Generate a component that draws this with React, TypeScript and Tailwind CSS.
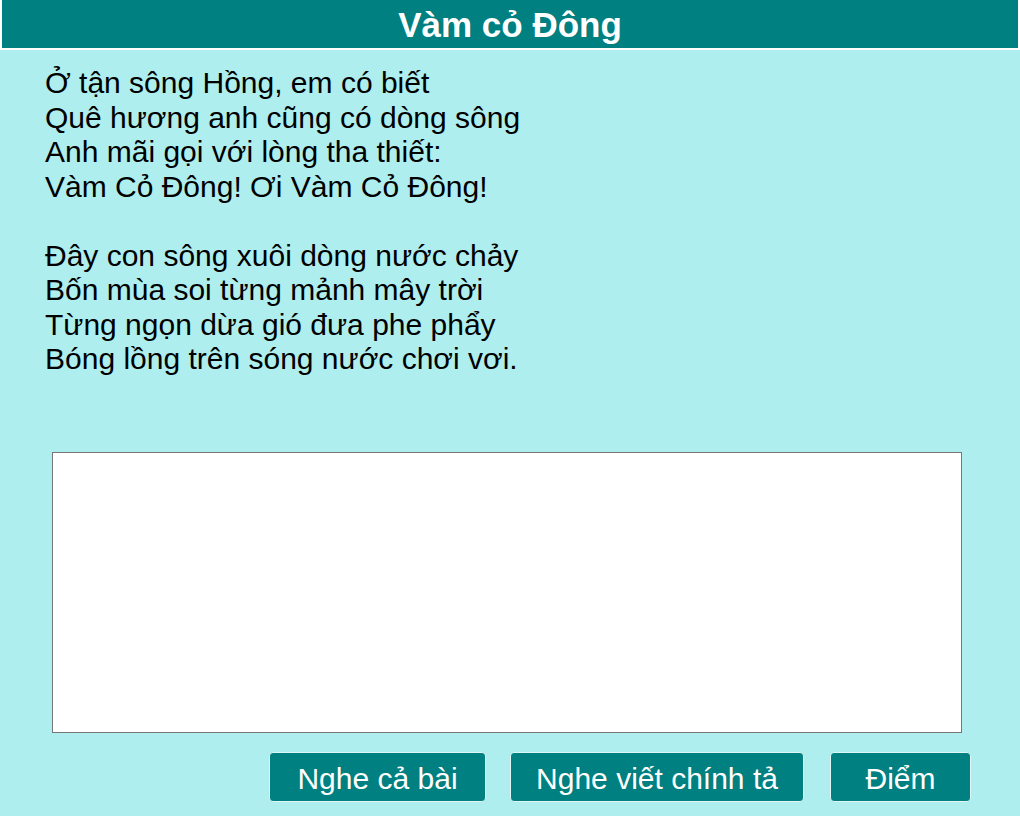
import React from "react";

const verses = [
  [
    "Ở tận sông Hồng, em có biết",
    "Quê hương anh cũng có dòng sông",
    "Anh mãi gọi với lòng tha thiết:",
    "Vàm Cỏ Đông! Ơi Vàm Cỏ Đông!",
  ],
  [
    "Đây con sông xuôi dòng nước chảy",
    "Bốn mùa soi từng mảnh mây trời",
    "Từng ngọn dừa gió đưa phe phẩy",
    "Bóng lồng trên sóng nước chơi vơi.",
  ],
];

const buttons = [
  { label: "Nghe cả bài", cls: "w-[217px]" },
  { label: "Nghe viết chính tả", cls: "w-[294px] ml-[24px]" },
  { label: "Điểm", cls: "w-[141px] ml-[26px]" },
];

export default function App() {
  return (
    <div className="w-[1020px] h-[816px] bg-[#afeeee] font-['Liberation_Sans',Arial,sans-serif] text-black">
      <div className="h-[50px] bg-[#008080] border-x-2 border-b-2 border-white flex items-center justify-center">
        <h1 className="text-[35px] font-bold text-white leading-none">Vàm cỏ Đông</h1>
      </div>

      <div className="pl-[45px] pt-[16px] text-[30px] leading-[34.5px] flex flex-col gap-[34.5px]">
        {verses.map((stanza, i) => (
          <div key={i}>
            {stanza.map((line) => (
              <p key={line}>{line}</p>
            ))}
          </div>
        ))}
      </div>

      <textarea className="block mt-[75px] ml-[52px] w-[910px] h-[281px] bg-white border border-[#767676] resize-none outline-none" />

      <div className="mt-[19px] flex pl-[269px]">
        {buttons.map((b) => (
          <button
            key={b.label}
            className={`${b.cls} h-[50px] pt-[4px] shrink-0 bg-[#008080] text-white text-[30px] leading-none rounded-[4px] border border-[#e0f7f7]`}
          >
            {b.label}
          </button>
        ))}
      </div>
    </div>
  );
}
